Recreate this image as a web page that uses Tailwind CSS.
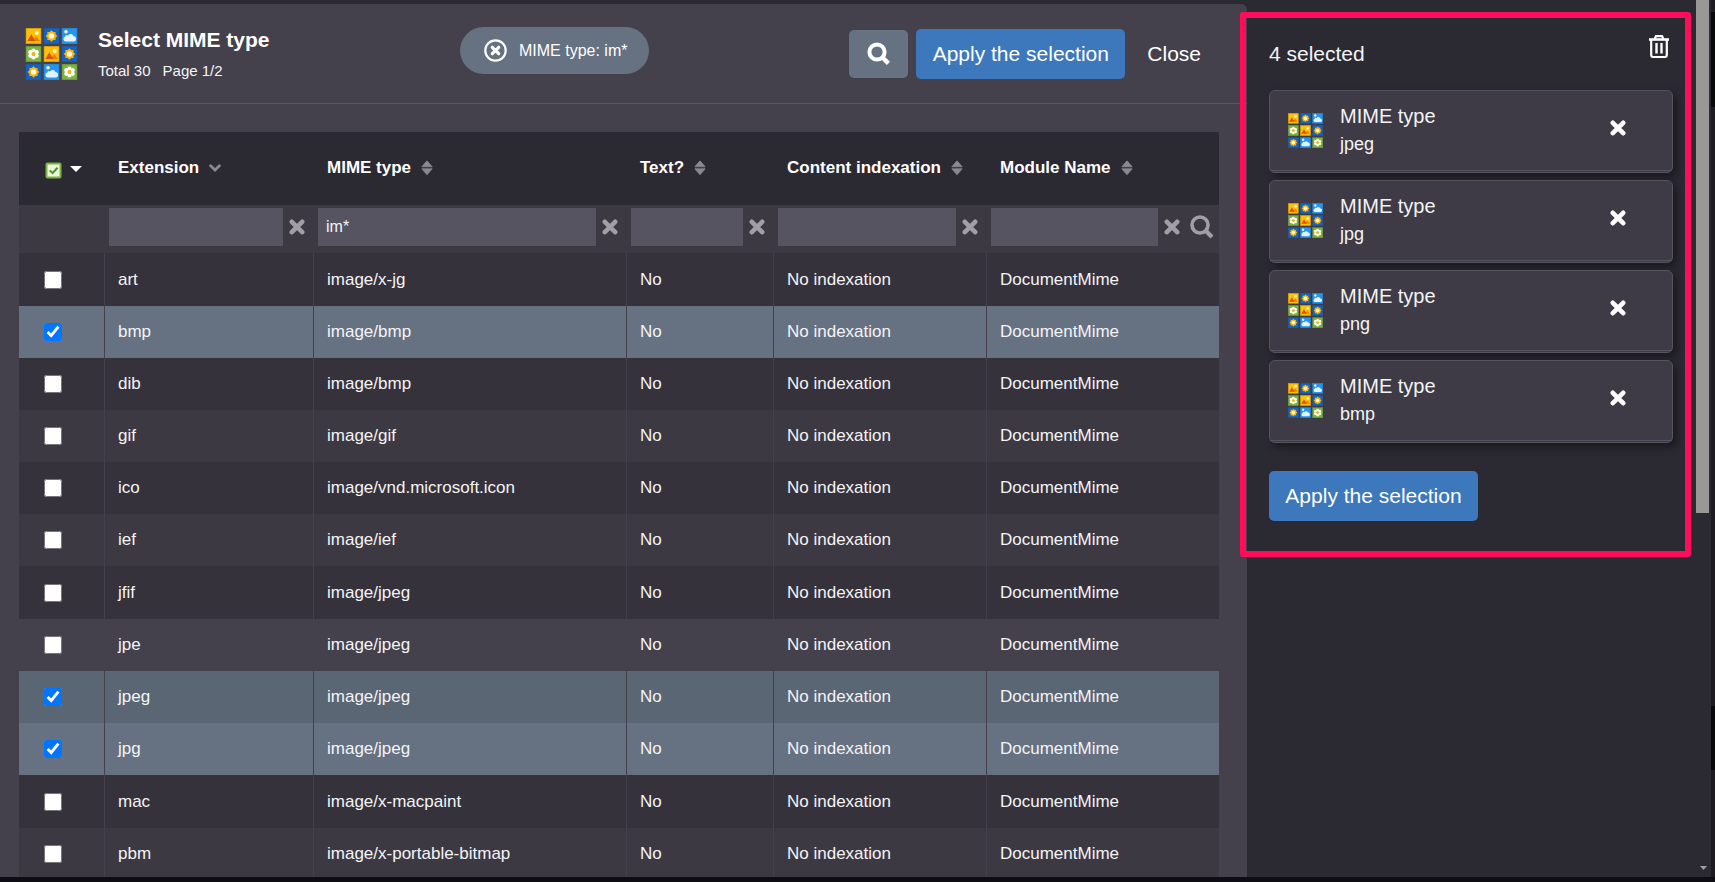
<!DOCTYPE html>
<html lang="en">
<head>
<meta charset="utf-8">
<meta name="viewport" content="width=device-width, initial-scale=1">
<title>Select MIME type</title>
<script src="https://cdn.jsdelivr.net/npm/@tailwindcss/browser@4"></script>
</head>
<body class="bg-[#0f0d14] font-['Liberation_Sans',Arial,sans-serif] text-[#f4f4f5]">

<!-- Shared icons -->
<svg class="hidden" aria-hidden="true">
  <symbol id="pic" viewBox="0 0 16 16">
    <rect x=".5" y=".5" width="15" height="15" fill="#ffc107" stroke="#d39e0a"/>
    <circle cx="11.3" cy="5" r="2" fill="#fff3b0"/>
    <path d="M7 13 10.8 8 14.500 13z" fill="#f57c00"/><path d="M1.800 13 5.800 6.300 9.800 13z" fill="#dd5200"/>
  </symbol>
  <symbol id="sun" viewBox="0 0 16 16">
    <rect x=".5" y=".5" width="15" height="15" fill="#1565c0" stroke="#1a5aa6"/>
    <path d="M8 2.2 9.8 4 12.1 3.9 12 6.2 13.8 8 12 9.8 12.1 12.1 9.8 12 8 13.8 6.2 12 3.9 12.1 4 9.8 2.2 8 4 6.2 3.9 3.9 6.2 4z" fill="#ffb300"/>
    <circle cx="8" cy="8" r="2.7" fill="#fffbe0"/>
  </symbol>
  <symbol id="cloud" viewBox="0 0 16 16">
    <rect x=".5" y=".5" width="15" height="15" fill="#2196f3" stroke="#2a88d2"/>
    <circle cx="4.500" cy="3.700" r="1.800" fill="#fff3a0"/>
    <path d="M4 13.5a2.6 2.6 0 0 1-.4-5 1.600 1.600 0 0 1 2.700-1A3.200 3.200 0 0 1 12 8a2.800 2.800 0 0 1 .6 5.500z" fill="#e3f2fd"/>
  </symbol>
  <symbol id="flower" viewBox="0 0 16 16">
    <rect x=".5" y=".5" width="15" height="15" fill="#7cb342" stroke="#6a9a3c"/>
    <g fill="#fff"><circle cx="8" cy="4.500" r="2.1"/><circle cx="8" cy="11.500" r="2.1"/><circle cx="4.800" cy="6.200" r="2.1"/><circle cx="11.200" cy="6.200" r="2.1"/><circle cx="4.800" cy="9.800" r="2.1"/><circle cx="11.200" cy="9.800" r="2.1"/></g>
    <circle cx="8" cy="8" r="1.900" fill="#ffb300"/>
  </symbol>
  <symbol id="mime" viewBox="0 0 52 52">
    <use href="#pic" width="16" height="16"/><use href="#sun" x="18" width="16" height="16"/><use href="#cloud" x="36" width="16" height="16"/>
    <use href="#flower" y="18" width="16" height="16"/><use href="#pic" x="18" y="18" width="16" height="16"/><use href="#sun" x="36" y="18" width="16" height="16"/>
    <use href="#sun" y="36" width="16" height="16"/><use href="#cloud" x="18" y="36" width="16" height="16"/><use href="#flower" x="36" y="36" width="16" height="16"/>
  </symbol>
  <symbol id="cross" viewBox="0 0 16 16"><path d="M2.8 2.8 13.2 13.2M13.2 2.8 2.8 13.2" stroke="currentColor" stroke-width="4.6" stroke-linecap="round"/></symbol>
  <symbol id="sort" viewBox="0 0 12 16"><path d="M6 .8 11.2 6.8H.8zM6 14.800 .8 8.800h10.400z" fill="currentColor" stroke="currentColor" stroke-width=".8" stroke-linejoin="round"/></symbol>
  <symbol id="down" viewBox="0 0 12 8"><path d="M1.6 1.8 6 6 10.4 1.8" fill="none" stroke="currentColor" stroke-width="2.8" stroke-linecap="round"/></symbol>
  <symbol id="search" viewBox="0 0 24 24"><circle cx="10" cy="10" r="7.6" fill="none" stroke="currentColor" stroke-width="4"/><path d="M16 16l5.4 5.4" stroke="currentColor" stroke-width="4.4"/></symbol>
  <symbol id="search-thin" viewBox="0 0 24 24"><circle cx="10" cy="10" r="8" fill="none" stroke="currentColor" stroke-width="3.6"/><path d="M16 16l6 6" stroke="currentColor" stroke-width="4.2"/></symbol>
</svg>

<div class="flex h-screen flex-col overflow-hidden pb-[5px]">
  <div class="flex min-h-0 flex-1 overflow-hidden bg-[#2b2932]">

    <main class="mt-1 min-w-0 flex-1 overflow-hidden rounded-tr-md bg-[#44414d]">
      <header class="flex h-[100px] items-start border-b border-[#5b5864] pr-[46px] pl-[25px]">
        <svg class="mt-6 h-[52px] w-[53px]"><use href="#mime"/></svg>
        <div class="mt-6 ml-5 w-[362px]">
          <h1 class="text-[21px] leading-6 font-bold text-white">Select MIME type</h1>
          <p class="mt-[9px] flex gap-3 text-[15px] leading-5"><span>Total 30</span><span>Page 1/2</span></p>
        </div>
        <button class="mt-[23px] flex h-[47px] items-center rounded-full bg-[#667182] pr-[22px] pl-6 text-[16px] text-white">
          <svg class="mr-3 h-[23px] w-[23px]" viewBox="0 0 23 23" fill="none" stroke="currentColor"><circle cx="11.5" cy="11.5" r="10.2" stroke-width="2.2"/><path d="M8.3 8.3l6.4 6.4M14.7 8.3l-6.4 6.4" stroke-width="3.2" stroke-linecap="round"/></svg>
          MIME type: im*
        </button>
        <div class="mt-[25px] ml-auto flex items-center text-[20px] text-white">
          <button aria-label="Search" class="flex h-12 w-[59px] items-center justify-center rounded-[5px] bg-[#667182]"><svg class="h-6 w-6"><use href="#search"/></svg></button>
          <button class="ml-2 h-[50px] w-[209px] rounded-[5px] bg-[#3c78bb] text-[21px]">Apply the selection</button>
          <button class="ml-[22px] text-[21px]">Close</button>
        </div>
      </header>

      <div class="pt-7 pr-7 pl-[19px]">
        <table class="w-full table-fixed border-separate border-spacing-0 text-left text-[17px]">
          <colgroup><col class="w-[86px]"><col class="w-[209px]"><col class="w-[313px]"><col class="w-[147px]"><col class="w-[213px]"><col></colgroup>
          <thead>
            <tr id="heads" class="h-[73px] bg-[#2b2932] text-[17px] text-white">
              <th class="pl-[26px]">
                <button aria-label="Selection menu" class="flex items-center gap-2">
                  <svg class="mt-1 h-[17px] w-[17px]" viewBox="0 0 17 17"><rect x=".5" y=".5" width="16" height="16" rx="2" fill="#7cb342"/><rect x="2.5" y="2.5" width="12" height="12" fill="#eaf7d8"/><path d="M4.8 8.4l2.7 2.7 5-5.4" fill="none" stroke="#4c8f2c" stroke-width="2"/></svg>
                  <svg class="h-[6px] w-3" viewBox="0 0 12 6"><path d="M0 0h12L6 6z" fill="#fff"/></svg>
                </button>
              </th>
            </tr>
            <tr id="filters" class="h-12 bg-[#3c3943]"><td></td></tr>
          </thead>
          <tbody id="rows"></tbody>
        </table>
      </div>
    </main>

    <aside class="relative flex w-[468px] shrink-0">
      <div class="min-w-0 flex-1 pr-[23px] pl-[22px]">
        <div class="flex items-start justify-between pt-[34px] pr-1">
          <h2 class="mt-2 text-[21px] leading-6">4 selected</h2>
          <button aria-label="Clear selection" class="text-white">
            <svg class="h-6 w-5" viewBox="0 0 20 24" fill="none" stroke="currentColor" stroke-width="2"><path d="M0 5.5h20" stroke-width="2.6"/><path d="M5.5 5 7 2.2h6L14.500 5M2.200 6v15q0 2 2 2h11.600q2 0 2-2V6" stroke-width="2.200"/><path d="M7.500 9v10.500M12.500 9v10.500" stroke-width="2.400"/></svg>
          </button>
        </div>
        <ul id="cards" class="mt-6 flex flex-col gap-[7px]"></ul>
        <button class="mt-7 h-[50px] w-[209px] rounded-[5px] bg-[#3c78bb] text-[21px] text-white">Apply the selection</button>
      </div>
      <div class="flex w-[15px] flex-col items-start justify-between pb-[7px]">
        <div class="h-[59%] w-[13px] bg-[#999897]"></div>
        <svg class="mx-1 h-1 w-[7px]" viewBox="0 0 7 4"><path d="M0 0h7L3.500 4z" fill="#a0a0a0"/></svg>
      </div>
      <div class="flex w-1 flex-col bg-[#1e1c22] pt-3">
        <div class="h-[95px] bg-[#09080b]"></div>
        <div class="mt-auto mb-[107px] h-16 bg-[#09080b]"></div>
      </div>
      <!-- Highlight frame around the selection panel -->
      <div class="pointer-events-none absolute top-3 right-6 -left-[7px] h-[545px] rounded-[3px] border-6 border-[#ff0d5b]"></div>
    </aside>
  </div>
</div>

<script>
  const columns = ['Extension', 'MIME type', 'Text?', 'Content indexation', 'Module Name'];
  const data = [
    ['art', 'image/x-jg', 'h-[53px] bg-[#35323c]'],
    ['bmp', 'image/bmp', 'h-[52px] bg-[#667182]', 1],
    ['dib', 'image/bmp', 'h-[52px] bg-[#35323c]'],
    ['gif', 'image/gif', 'h-[52px] bg-[#3c3943]'],
    ['ico', 'image/vnd.microsoft.icon', 'h-[52px] bg-[#35323c]'],
    ['ief', 'image/ief', 'h-[52px] bg-[#3c3943]'],
    ['jfif', 'image/jpeg', 'h-[53px] bg-[#35323c]'],
    ['jpe', 'image/jpeg', 'h-[52px] bg-[#44414d]'],
    ['jpeg', 'image/jpeg', 'h-[52px] bg-[#5b6674]', 1],
    ['jpg', 'image/jpeg', 'h-[52px] bg-[#667182]', 1],
    ['mac', 'image/x-macpaint', 'h-[53px] bg-[#35323c]'],
    ['pbm', 'image/x-portable-bitmap', 'h-[52px] bg-[#3c3943]'],
  ];
  const add = (id, html) => document.getElementById(id).insertAdjacentHTML('beforeend', html);

  add('heads', columns.map((name, i) => `<th class="pl-[13px] pb-[2px]"><button class="flex items-center gap-[10px] whitespace-nowrap">${name}${
    i ? '<svg class="h-4 w-3 text-[#8a8890]"><use href="#sort"/></svg>' : '<svg class="h-2 w-3 text-[#8a8890]"><use href="#down"/></svg>'
  }</button></th>`).join(''));

  add('filters', columns.map((name, i) => `<td class="pl-1 pb-1"><div class="flex items-center ${i === 4 ? 'pr-[5px]' : 'pr-[9px]'}">
    <input type="text" aria-label="Filter ${name}" value="${i === 1 ? 'im*' : ''}" class="h-[38px] min-w-0 flex-1 bg-[#575461] px-2 text-[16px]">
    <button aria-label="Clear ${name}" class="ml-[6px] text-[#a09fa5]"><svg class="h-4 w-4"><use href="#cross"/></svg></button>
    ${i === 4 ? '<button aria-label="Run filter" class="ml-[10px] text-[#a09fa5]"><svg class="h-6 w-6"><use href="#search-thin"/></svg></button>' : ''}
  </div></td>`).join(''));

  add('rows', data.map(([ext, mime, look, on]) => `<tr class="${look}">
    <td class="border-r border-[#44414d] pl-[25px]"><input type="checkbox" aria-label="Select ${ext}" ${on ? 'checked' : ''} class="block h-[18px] w-[18px]"></td>
    ${[ext, mime, 'No', 'No indexation'].map(t => `<td class="border-r border-[#44414d] pl-[13px]">${t}</td>`).join('')}
    <td class="pl-[13px]">DocumentMime</td></tr>`).join(''));

  add('cards', ['jpeg', 'jpg', 'png', 'bmp'].map(ext => `<li class="flex h-[83px] flex-col rounded-md border border-[#575461] bg-[#3e3b46] shadow-[4px_4px_8px_rgba(0,0,0,0.4)]">
    <div class="flex flex-1 items-start border-b border-[#575461] pt-[11px] pr-[46px] pl-[18px]">
      <svg class="mt-[11px] h-[35px] w-[35px]"><use href="#mime"/></svg>
      <div class="ml-[17px] flex-1"><p class="text-[20px] leading-7">MIME type</p><p class="text-[18px] leading-7">${ext}</p></div>
      <button aria-label="Remove ${ext}" class="mt-[18px] text-white"><svg class="h-4 w-4"><use href="#cross"/></svg></button>
    </div><div class="h-px"></div></li>`).join(''));
</script>
</body>
</html>
